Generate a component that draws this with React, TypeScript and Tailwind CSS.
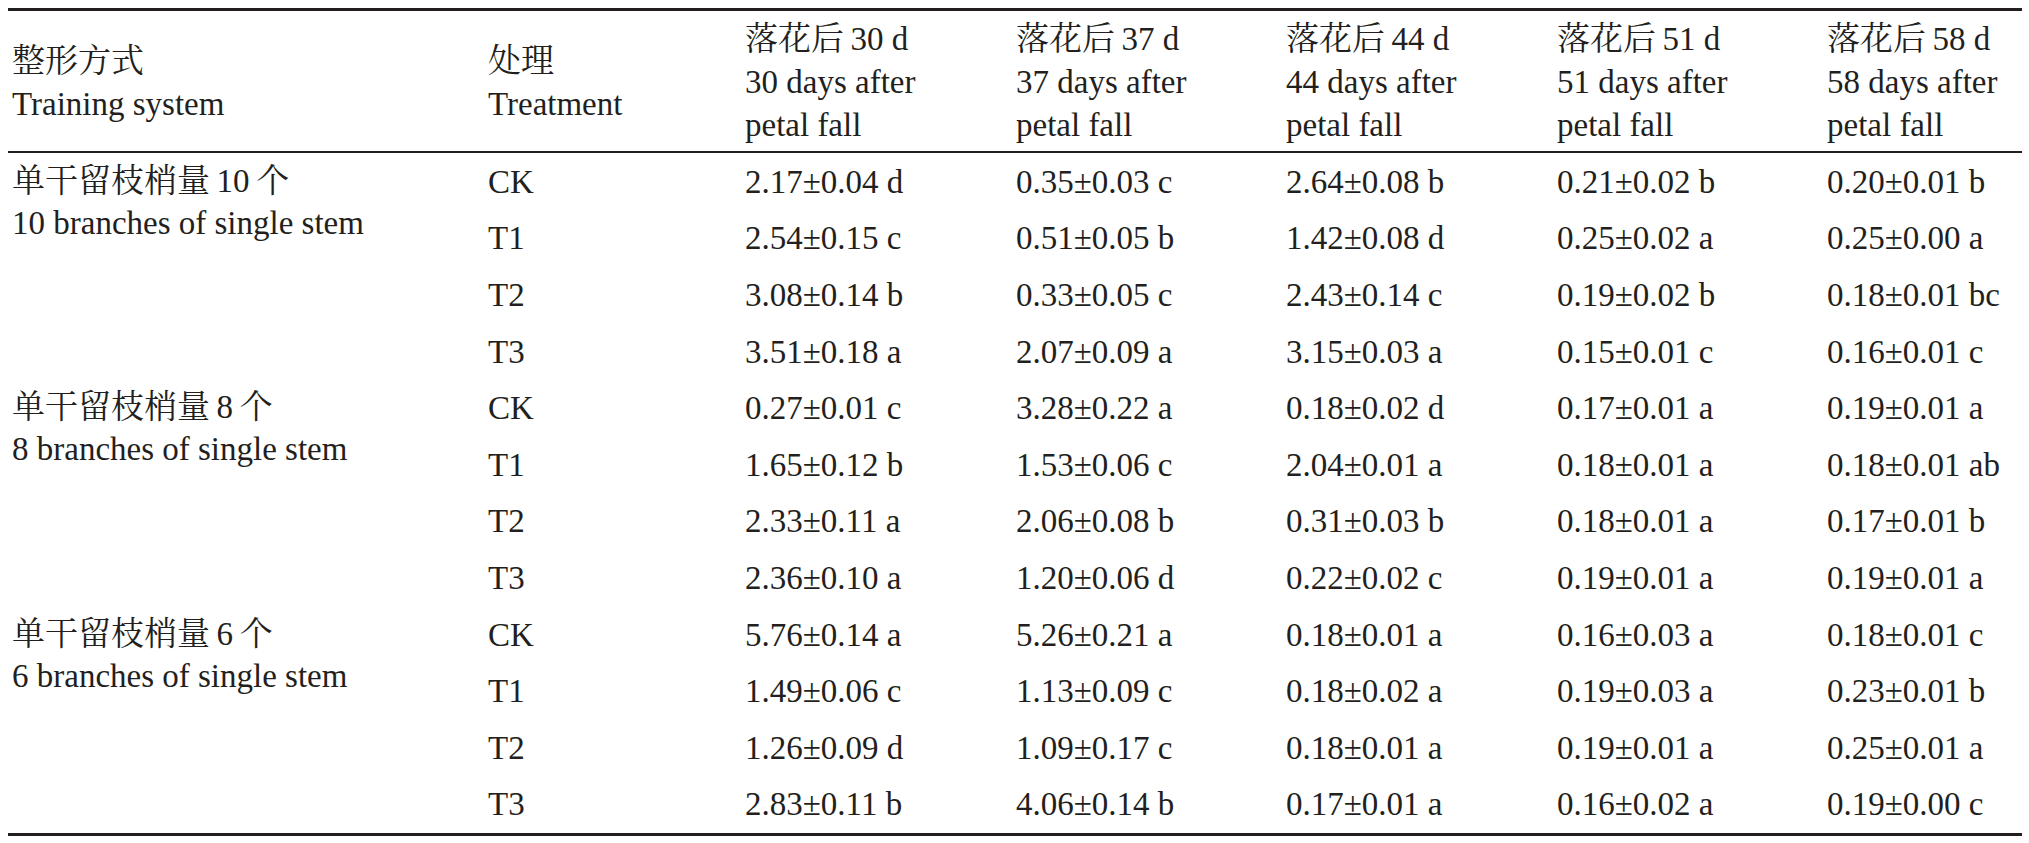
const columns = [
  { zh: "落花后\u200930 d", en: "30 days after", en2: "petal fall" },
  { zh: "落花后\u200937 d", en: "37 days after", en2: "petal fall" },
  { zh: "落花后\u200944 d", en: "44 days after", en2: "petal fall" },
  { zh: "落花后\u200951 d", en: "51 days after", en2: "petal fall" },
  { zh: "落花后\u200958 d", en: "58 days after", en2: "petal fall" },
];

const groups = [
  {
    zh: "单干留枝梢量\u200910\u2009个",
    en: "10 branches of single stem",
    rows: [
      ["CK", "2.17±0.04 d", "0.35±0.03 c", "2.64±0.08 b", "0.21±0.02 b", "0.20±0.01 b"],
      ["T1", "2.54±0.15 c", "0.51±0.05 b", "1.42±0.08 d", "0.25±0.02 a", "0.25±0.00 a"],
      ["T2", "3.08±0.14 b", "0.33±0.05 c", "2.43±0.14 c", "0.19±0.02 b", "0.18±0.01 bc"],
      ["T3", "3.51±0.18 a", "2.07±0.09 a", "3.15±0.03 a", "0.15±0.01 c", "0.16±0.01 c"],
    ],
  },
  {
    zh: "单干留枝梢量\u20098\u2009个",
    en: "8 branches of single stem",
    rows: [
      ["CK", "0.27±0.01 c", "3.28±0.22 a", "0.18±0.02 d", "0.17±0.01 a", "0.19±0.01 a"],
      ["T1", "1.65±0.12 b", "1.53±0.06 c", "2.04±0.01 a", "0.18±0.01 a", "0.18±0.01 ab"],
      ["T2", "2.33±0.11 a", "2.06±0.08 b", "0.31±0.03 b", "0.18±0.01 a", "0.17±0.01 b"],
      ["T3", "2.36±0.10 a", "1.20±0.06 d", "0.22±0.02 c", "0.19±0.01 a", "0.19±0.01 a"],
    ],
  },
  {
    zh: "单干留枝梢量\u20096\u2009个",
    en: "6 branches of single stem",
    rows: [
      ["CK", "5.76±0.14 a", "5.26±0.21 a", "0.18±0.01 a", "0.16±0.03 a", "0.18±0.01 c"],
      ["T1", "1.49±0.06 c", "1.13±0.09 c", "0.18±0.02 a", "0.19±0.03 a", "0.23±0.01 b"],
      ["T2", "1.26±0.09 d", "1.09±0.17 c", "0.18±0.01 a", "0.19±0.01 a", "0.25±0.01 a"],
      ["T3", "2.83±0.11 b", "4.06±0.14 b", "0.17±0.01 a", "0.16±0.02 a", "0.19±0.00 c"],
    ],
  },
];

const gridCols = "grid grid-cols-[476px_257px_271px_270px_271px_270px_1fr]";

export default function App() {
  return (
    <div className="w-[2029px] h-[843px] bg-white pt-[8px] pl-[8px] pr-[7px] font-['Liberation_Serif','Noto_Serif_CJK_SC','Noto_Sans_CJK_SC',serif] text-[33px] leading-[43px] text-[#231f20]">
      {/* header */}
      <div className={`${gridCols} border-t-[3px] border-b-2 border-[#231f20] pt-[7px] pb-[4px]`}>
        <div className="flex flex-col justify-center pl-1">
          <span>整形方式</span>
          <span>Training system</span>
        </div>
        <div className="flex flex-col justify-center pl-1">
          <span>处理</span>
          <span>Treatment</span>
        </div>
        {columns.map((c) => (
          <div key={c.zh} className="flex flex-col pl-1">
            <span>{c.zh}</span>
            <span>{c.en}</span>
            <span>{c.en2}</span>
          </div>
        ))}
      </div>

      {/* body */}
      <div className={`${gridCols} auto-rows-[56.6px] pt-[1px] border-b-[3px] border-[#231f20]`}>
        {groups.map((g) =>
          g.rows.map((r, i) => (
            <>
              {i === 0 && (
                <div key={g.zh} className="row-span-4 flex flex-col pl-1 pt-[7px]">
                  <span className="leading-[41px]">{g.zh}</span>
                  <span>{g.en}</span>
                </div>
              )}
              {r.map((cell, j) => (
                <div key={`${g.zh}-${i}-${j}`} className="flex items-center pl-1 whitespace-nowrap">
                  {cell}
                </div>
              ))}
            </>
          ))
        )}
      </div>
    </div>
  );
}
